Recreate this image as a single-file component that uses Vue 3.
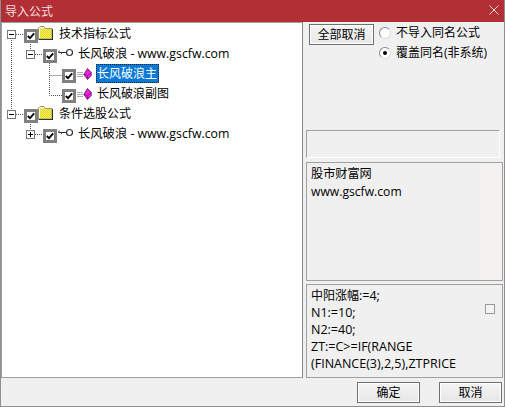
<script setup>
const rows = [
  { id: 1, indent: 7, box: 'minus', icon: 'folder', text: '技术指标公式' },
  { id: 2, indent: 26, box: 'minus', icon: 'key', text: '长风破浪 - www.gscfw.com' },
  { id: 3, indent: 45, box: '', icon: 'gem', text: '长风破浪主', selected: true },
  { id: 4, indent: 45, box: '', icon: 'gem', text: '长风破浪副图' },
  { id: 5, indent: 7, box: 'minus', icon: 'folder', text: '条件选股公式' },
  { id: 6, indent: 26, box: 'plus', icon: 'key', text: '长风破浪 - www.gscfw.com' }
]
const formula = ['N1:=10;', 'N2:=40;', 'ZT:=C>=IF(RANGE', '(FINANCE(3),2,5),ZTPRICE']
</script>

<template>
  <div class="window">
    <header class="titlebar">
      <span class="title">导入公式</span>
      <svg class="close" width="10" height="10" viewBox="0 0 10 10"><path d="M0.5 0.5L9.5 9.5M9.5 0.5L0.5 9.5" stroke="#f3d9da" stroke-width="1" fill="none"/></svg>
    </header>
    <main class="content">
      <section class="tree">
        <svg class="lines" width="300" height="130" viewBox="0 0 300 130">
          <g stroke="#555" stroke-width="1" stroke-dasharray="1 1" fill="none">
            <path d="M9.5 15V87"/><path d="M14 11.5H22"/><path d="M28.5 19V27"/><path d="M33 31.5H41"/>
            <path d="M47.5 36V72.5H60"/><path d="M47.5 52.5H60"/><path d="M14 91.5H22"/><path d="M28.5 99V108"/><path d="M33 111.5H41"/>
          </g>
        </svg>
        <div v-for="r in rows" :key="r.id" class="row" :style="{ paddingLeft: r.indent + 'px' }">
          <span class="expander">
            <svg v-if="r.box" width="9" height="9" viewBox="0 0 9 9">
              <rect x="0.5" y="0.5" width="8" height="8" fill="#fff" stroke="#777"/>
              <path d="M2 4.5H7" stroke="#000"/>
              <path v-if="r.box === 'plus'" d="M4.5 2V7" stroke="#000"/>
            </svg>
          </span>
          <span class="check">
            <svg width="8" height="8" viewBox="0 0 8 8"><path d="M0.8 4L3 6.2L7.2 1.4" stroke="#000" stroke-width="1.8" fill="none"/></svg>
          </span>
          <svg v-if="r.icon === 'folder'" class="icon raised" width="16" height="14" viewBox="0 0 16 14">
            <defs>
              <pattern id="dither" width="2" height="2" patternUnits="userSpaceOnUse">
                <rect width="2" height="2" fill="#fff14a"/>
                <rect width="1" height="1" fill="#dcd436"/>
                <rect x="1" y="1" width="1" height="1" fill="#dcd436"/>
              </pattern>
            </defs>
            <path d="M0.5 13V2L2 0.5H6L7.5 2.5H14V13Z" fill="url(#dither)" stroke="#9a9a6a"/>
            <path d="M1.5 1.8H6M1.5 2V12" stroke="#fff"/>
            <path d="M0.5 13.5H15M14.5 3V13.5" stroke="#333"/>
          </svg>
          <svg v-else-if="r.icon === 'key'" class="icon raised" width="16" height="14" viewBox="0 0 16 14">
            <circle cx="12.5" cy="6.5" r="3" fill="#fff" stroke="#333" stroke-width="1.2"/>
            <path d="M1.5 6.5H9.5M2 6.5V4.5M4.5 6.5V8" stroke="#333" fill="none"/>
          </svg>
          <svg v-else class="icon" width="16" height="14" viewBox="0 0 16 14">
            <path d="M1 5.5H7M1 7.5H7M1 9.5H7" stroke="#aaa"/>
            <path d="M11.5 1.5L15.2 5.5V8.5L11.5 12.5L7.8 7.5Z" fill="#f020e0" stroke="#50104a" stroke-width="0.8"/>
            <path d="M8.2 7.5L11.5 8.5L15 6M11.5 8.5V12" stroke="#8a1080" fill="none" stroke-width="0.8"/>
          </svg>
          <span class="label" :class="{ selected: r.selected, wide: r.icon === 'key' }">{{ r.text }}</span>
        </div>
      </section>
      <aside class="side">
        <div class="options">
          <button class="btn all">全部取消</button>
          <div class="radios">
            <label class="radio"><span class="dot"></span>不导入同名公式</label>
            <label class="radio"><span class="dot on"></span>覆盖同名(非系统)</label>
          </div>
        </div>
        <div class="empty"></div>
        <div class="note">
          <div>股市财富网</div>
          <div>www.gscfw.com</div>
        </div>
        <div class="code">
          <div><span class="cjk">中阳涨幅</span>:=4;</div>
          <div v-for="l in formula" :key="l">{{ l }}</div>
          <span class="scroll-box"></span>
        </div>
      </aside>
    </main>
    <footer class="footer">
      <button class="btn action">确定</button>
      <button class="btn action">取消</button>
    </footer>
  </div>
</template>

<style scoped>
.window {
  width: 505px;
  height: 407px;
  box-sizing: border-box;
  display: flex;
  flex-direction: column;
  background: #f0f0f0;
  border: 1px solid #8f8f8f;
  border-top: 0;
  font: 12px/17px "Open Sans", "Noto Sans CJK SC", sans-serif;
  color: #000;
  overflow: hidden;
}
.titlebar {
  height: 22px;
  margin: 0 -1px;
  padding: 0 6px 0 5px;
  background: #b22f35;
  display: flex;
  align-items: center;
  justify-content: space-between;
  color: #f4dfe0;
  flex: none;
}
.close { margin-bottom: 3px; }
.content { display: flex; flex: none; height: 356px; }
.tree {
  position: relative;
  width: 302px;
  box-sizing: border-box;
  background: #fff;
  border: 1px solid #a0a0a0;
  border-right-color: #8a8a8a;
  padding-top: 1px;
}
.lines { position: absolute; left: 0; top: 0; pointer-events: none; }
.row {
  position: relative;
  height: 20px;
  display: flex;
  align-items: center;
  white-space: nowrap;
}
.expander { width: 9px; height: 9px; flex: none; display: flex; margin-left: -2px; }
.check {
  width: 14px;
  height: 14px;
  box-sizing: border-box;
  border: 3px solid #808080;
  background: #fff;
  margin: 4px -1px 0 8px;
  display: flex;
  align-items: center;
  justify-content: center;
  flex: none;
}
.icon { margin-left: 1px; flex: none; }
.raised { margin-top: -2px; }
.label { margin: -2px 0 0 4px; padding: 0 1px; }
.wide { font-size: 12.3px; }
.selected {
  padding-right: 2px;
  background: #0a78d7;
  color: #fff;
  outline: 1px dotted #222;
  outline-offset: -1px;
  line-height: 19px;
}
.side {
  flex: 1;
  display: flex;
  flex-direction: column;
  padding: 2px 0 0 3px;
  min-width: 0;
}
.options { display: flex; height: 106px; flex: none; padding-left: 3px; }
.btn {
  font: inherit;
  color: #000;
  background: linear-gradient(#f4f4f4, #ececec 60%, #e6e6e6);
  border: 1px solid #6f6f6f;
  padding: 0;
  box-shadow: inset 0 0 0 1px #fff;
}
.all { width: 65px; height: 21px; }
.radios { margin-left: 5px; display: flex; flex-direction: column; gap: 3px; }
.radio { display: flex; align-items: center; height: 17px; }
.dot {
  width: 12px;
  height: 12px;
  box-sizing: border-box;
  border-radius: 50%;
  border: 1px solid #888;
  border-bottom-color: #ddd;
  border-right-color: #ddd;
  background: #fff;
  margin-right: 5px;
  position: relative;
}
.dot.on::after {
  content: "";
  position: absolute;
  left: 3px;
  top: 3px;
  width: 4px;
  height: 4px;
  border-radius: 50%;
  background: #000;
}
.empty {
  width: 194px;
  height: 28px;
  flex: none;
  box-sizing: border-box;
  border: 1px solid #a0a0a0;
  border-right-color: #fff;
  border-bottom-color: #fff;
  margin-bottom: 4px;
}
.note, .code {
  width: 197px;
  box-sizing: border-box;
  border: 1px solid #a0a0a0;
  padding: 2px 0 0 4px;
  position: relative;
}
.note {
  height: 119px;
  margin-bottom: 3px;
  line-height: 18px;
  font-size: 12.15px;
  background: linear-gradient(90deg, #f0f0f0 174px, #f3f2f0 174px);
}
.code { height: 94px; font-size: 12.5px; }
.cjk { font-size: 12px; }
.scroll-box {
  position: absolute;
  right: 7px;
  top: 19px;
  width: 10px;
  height: 10px;
  box-sizing: border-box;
  border: 1px solid #999;
  background: #f4f4f4;
}
.footer {
  flex: 1;
  display: flex;
  justify-content: flex-end;
  gap: 19px;
  padding: 4px 2px 0 0;
}
.action { width: 63px; height: 21px; }
</style>
